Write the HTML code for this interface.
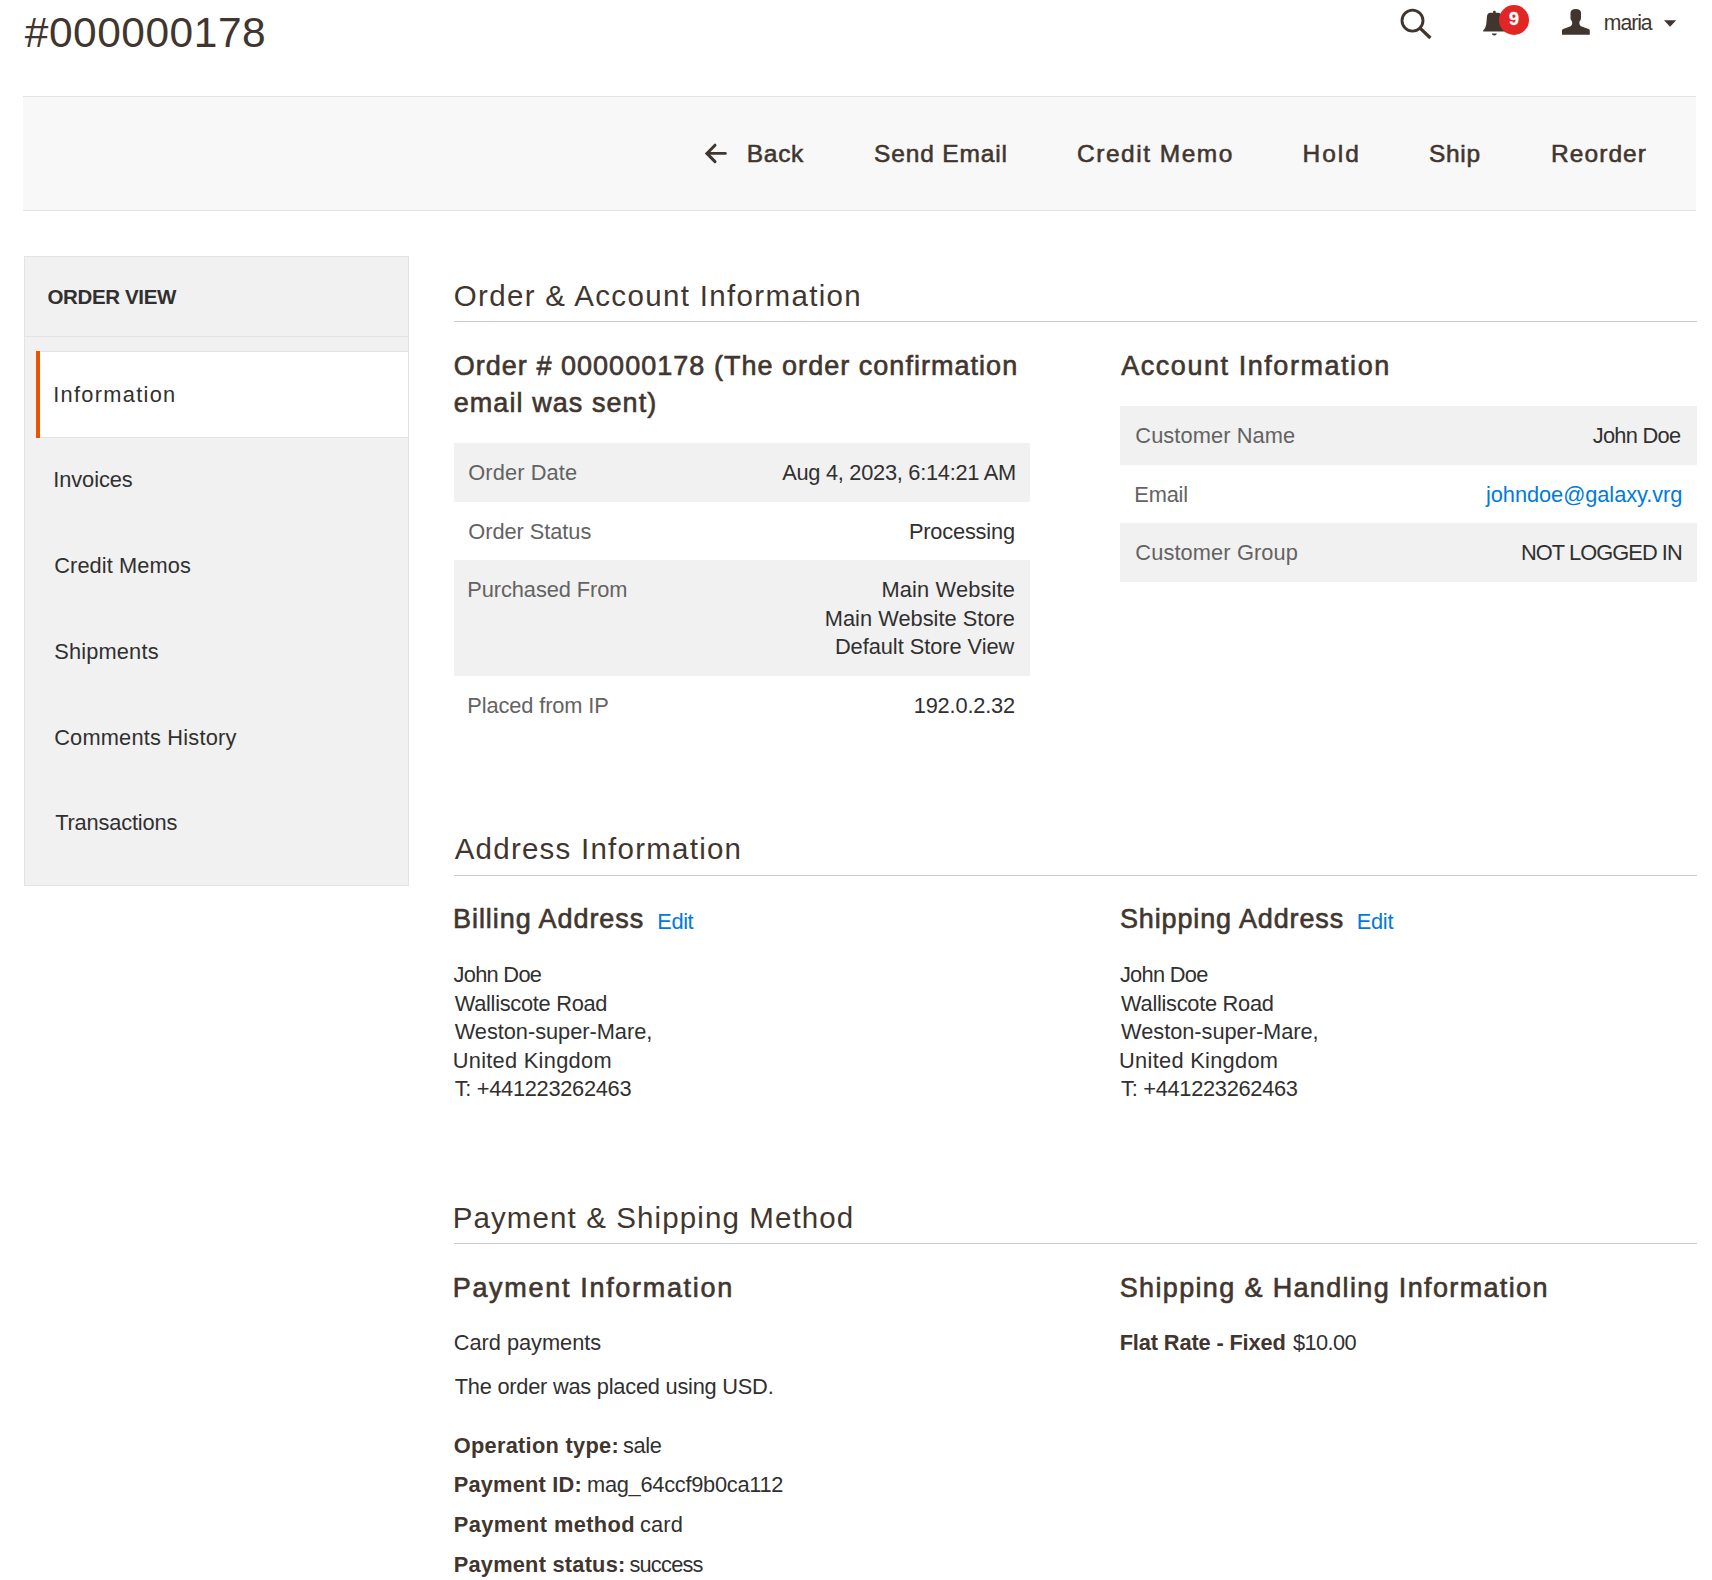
<!DOCTYPE html>
<html><head><meta charset="utf-8"><title>#000000178</title>
<style>
html,body{margin:0;padding:0;background:#fff;}
body{position:relative;width:1712px;height:1580px;overflow:hidden;font-family:"Liberation Sans",sans-serif;}
.t{position:absolute;white-space:pre;line-height:1;}
.r{position:absolute;box-sizing:border-box;}
</style></head><body>
<!-- toolbar -->
<div class="r" style="left:23px;top:96px;width:1673px;height:115px;background:#f8f8f8;border-top:1px solid #e3e3e3;border-bottom:1px solid #e3e3e3"></div>
<!-- sidebar -->
<div class="r" style="left:24px;top:256px;width:385px;height:630px;background:#f1f1f1;border:1px solid #e3e3e3"></div>
<div class="r" style="left:25px;top:336px;width:383px;height:1px;background:#e3e3e3"></div>
<div class="r" style="left:36px;top:351px;width:372px;height:87px;background:#fff;border-top:1px solid #e3e3e3;border-bottom:1px solid #e3e3e3"></div>
<div class="r" style="left:36px;top:351px;width:4px;height:87px;background:#eb5202"></div>
<!-- section dividers -->
<div class="r" style="left:454px;top:321px;width:1243px;height:1px;background:#cccccc"></div>
<div class="r" style="left:454px;top:875px;width:1243px;height:1px;background:#cccccc"></div>
<div class="r" style="left:454px;top:1243px;width:1243px;height:1px;background:#cccccc"></div>
<!-- order table zebra -->
<div class="r" style="left:454px;top:443px;width:576px;height:59px;background:#f1f1f1"></div>
<div class="r" style="left:454px;top:560px;width:576px;height:116px;background:#f1f1f1"></div>
<!-- account table zebra -->
<div class="r" style="left:1120px;top:406px;width:577px;height:59px;background:#f1f1f1"></div>
<div class="r" style="left:1120px;top:523px;width:577px;height:59px;background:#f1f1f1"></div>
<!-- icons -->
<svg style="position:absolute;left:0;top:0" width="1712" height="60" viewBox="0 0 1712 60">
  <circle cx="1412.5" cy="20.6" r="10.5" fill="none" stroke="#41362f" stroke-width="2.9"/>
  <line x1="1419.5" y1="27.6" x2="1430.4" y2="38" stroke="#41362f" stroke-width="3.3"/>
  <rect x="1493.1" y="10.8" width="2.6" height="3" rx="1" fill="#41362f"/>
  <path d="M1483,31.6 L1483.2,30.6 C1485.2,28.8 1486.2,26 1486.5,22 L1486.9,16.8 C1487.1,14 1488.4,12.8 1490.6,12.8 L1498,12.8 C1500.2,12.8 1501.5,14 1501.7,16.8 L1502.1,22 C1502.4,26 1503.4,28.8 1505.4,30.6 L1505.6,31.6 Z" fill="#41362f"/>
  <path d="M1491.8,33.5 L1496.8,33.5 C1496.6,34.8 1495.7,35.5 1494.3,35.5 C1492.9,35.5 1492,34.8 1491.8,33.5 Z" fill="#41362f"/>
  <circle cx="1514" cy="20" r="15" fill="#e22626"/>
  <path d="M1562,34.8 L1562,30.6 C1562,29.8 1562.4,29.4 1563.2,29 L1570.6,26.2 C1571.8,25.6 1572.2,24.5 1572.2,22.8 L1572,21.2 C1571,20.4 1570.5,19.6 1570.5,18 L1570.5,12.6 C1570.5,10.3 1572.5,8.9 1575.8,8.9 C1579.1,8.9 1581,10.3 1581,12.6 L1581,18 C1581,19.6 1580.5,20.4 1579.6,21.2 L1579.4,22.8 C1579.4,24.5 1579.8,25.6 1581,26.2 L1588.6,29 C1589.4,29.4 1589.8,29.8 1589.8,30.6 L1589.8,34.8 Z" fill="#41362f"/>
  <polygon points="1664,20.2 1676.2,20.2 1670.1,26.8" fill="#41362f"/>
</svg>
<div class="t" style="left:1499px;top:10px;width:30px;text-align:center;font-size:18px;font-weight:700;color:#fff;-webkit-text-stroke:0.3px #fff">9</div>
<svg style="position:absolute;left:700px;top:140px" width="32" height="26" viewBox="700 140 32 26">
  <line x1="708" y1="153.4" x2="725.3" y2="153.4" stroke="#41362f" stroke-width="2.9" stroke-linecap="round"/>
  <polyline points="715,145.2 706.9,153.4 715,161.6" fill="none" stroke="#41362f" stroke-width="3" stroke-linecap="round" stroke-linejoin="miter"/>
</svg>
<div class="t" style="left:24.8px;top:12px;font-size:42.5px;font-weight:400;letter-spacing:0.50px;color:#41362f">#000000178</div>
<div class="t" style="left:1603.8px;top:12px;font-size:21.2px;font-weight:400;letter-spacing:-1.05px;color:#41362f">maria</div>
<div class="t" style="left:746.8px;top:142px;font-size:24.5px;font-weight:400;letter-spacing:0.70px;color:#41362f;-webkit-text-stroke:0.56px #41362f">Back</div>
<div class="t" style="left:874.0px;top:142px;font-size:24.5px;font-weight:400;letter-spacing:0.86px;color:#41362f;-webkit-text-stroke:0.56px #41362f">Send Email</div>
<div class="t" style="left:1077.1px;top:142px;font-size:24.5px;font-weight:400;letter-spacing:1.50px;color:#41362f;-webkit-text-stroke:0.56px #41362f">Credit Memo</div>
<div class="t" style="left:1302.4px;top:142px;font-size:24.5px;font-weight:400;letter-spacing:2.07px;color:#41362f;-webkit-text-stroke:0.56px #41362f">Hold</div>
<div class="t" style="left:1429.0px;top:142px;font-size:24.5px;font-weight:400;letter-spacing:0.67px;color:#41362f;-webkit-text-stroke:0.56px #41362f">Ship</div>
<div class="t" style="left:1551.1px;top:142px;font-size:24.5px;font-weight:400;letter-spacing:1.05px;color:#41362f;-webkit-text-stroke:0.56px #41362f">Reorder</div>
<div class="t" style="left:47.5px;top:287px;font-size:20.5px;font-weight:700;letter-spacing:-0.37px;color:#303030">ORDER VIEW</div>
<div class="t" style="left:53.2px;top:384px;font-size:21.8px;font-weight:400;letter-spacing:1.30px;color:#303030">Information</div>
<div class="t" style="left:53.2px;top:469px;font-size:21.8px;font-weight:400;letter-spacing:-0.06px;color:#303030">Invoices</div>
<div class="t" style="left:54.2px;top:555px;font-size:21.8px;font-weight:400;letter-spacing:0.10px;color:#303030">Credit Memos</div>
<div class="t" style="left:54.2px;top:641px;font-size:21.8px;font-weight:400;letter-spacing:0.17px;color:#303030">Shipments</div>
<div class="t" style="left:54.2px;top:727px;font-size:21.8px;font-weight:400;letter-spacing:0.19px;color:#303030">Comments History</div>
<div class="t" style="left:55.2px;top:812px;font-size:21.8px;font-weight:400;letter-spacing:-0.17px;color:#303030">Transactions</div>
<div class="t" style="left:453.7px;top:281px;font-size:29.5px;font-weight:400;letter-spacing:1.34px;color:#41362f">Order &amp; Account Information</div>
<div class="t" style="left:454.7px;top:834px;font-size:29.5px;font-weight:400;letter-spacing:1.24px;color:#41362f">Address Information</div>
<div class="t" style="left:452.7px;top:1203px;font-size:29.5px;font-weight:400;letter-spacing:1.11px;color:#41362f">Payment &amp; Shipping Method</div>
<div class="t" style="left:453.7px;top:353px;font-size:27px;font-weight:400;letter-spacing:1.03px;color:#41362f;-webkit-text-stroke:0.62px #41362f">Order # 000000178 (The order confirmation</div>
<div class="t" style="left:453.7px;top:390px;font-size:27px;font-weight:400;letter-spacing:1.07px;color:#41362f;-webkit-text-stroke:0.62px #41362f">email was sent)</div>
<div class="t" style="left:1121.2px;top:353px;font-size:27px;font-weight:400;letter-spacing:1.55px;color:#41362f;-webkit-text-stroke:0.62px #41362f">Account Information</div>
<div class="t" style="left:453.0px;top:906px;font-size:27px;font-weight:400;letter-spacing:0.94px;color:#41362f;-webkit-text-stroke:0.62px #41362f">Billing Address</div>
<div class="t" style="left:657.3px;top:911px;font-size:21.8px;font-weight:400;letter-spacing:-0.40px;color:#007bdb">Edit</div>
<div class="t" style="left:1119.9px;top:906px;font-size:27px;font-weight:400;letter-spacing:0.88px;color:#41362f;-webkit-text-stroke:0.62px #41362f">Shipping Address</div>
<div class="t" style="left:1356.8px;top:911px;font-size:21.8px;font-weight:400;letter-spacing:-0.30px;color:#007bdb">Edit</div>
<div class="t" style="left:452.7px;top:1275px;font-size:27px;font-weight:400;letter-spacing:1.69px;color:#41362f;-webkit-text-stroke:0.62px #41362f">Payment Information</div>
<div class="t" style="left:1119.7px;top:1275px;font-size:27px;font-weight:400;letter-spacing:1.35px;color:#41362f;-webkit-text-stroke:0.62px #41362f">Shipping &amp; Handling Information</div>
<div class="t" style="left:468.3px;top:462px;font-size:21.8px;font-weight:400;letter-spacing:0.10px;color:#636363">Order Date</div>
<div class="t" style="left:468.3px;top:521px;font-size:21.8px;font-weight:400;letter-spacing:-0.05px;color:#636363">Order Status</div>
<div class="t" style="left:467.3px;top:579px;font-size:21.8px;font-weight:400;letter-spacing:-0.08px;color:#636363">Purchased From</div>
<div class="t" style="left:467.3px;top:695px;font-size:21.8px;font-weight:400;letter-spacing:-0.11px;color:#636363">Placed from IP</div>
<div class="t" style="left:782.2px;top:462px;font-size:21.8px;font-weight:400;letter-spacing:-0.27px;color:#303030">Aug 4, 2023, 6:14:21 AM</div>
<div class="t" style="left:908.9px;top:521px;font-size:21.8px;font-weight:400;letter-spacing:-0.19px;color:#303030">Processing</div>
<div class="t" style="left:881.5px;top:579px;font-size:21.8px;font-weight:400;letter-spacing:0.15px;color:#303030">Main Website</div>
<div class="t" style="left:824.8px;top:608px;font-size:21.8px;font-weight:400;letter-spacing:0.02px;color:#303030">Main Website Store</div>
<div class="t" style="left:834.9px;top:636px;font-size:21.8px;font-weight:400;letter-spacing:-0.04px;color:#303030">Default Store View</div>
<div class="t" style="left:913.7px;top:695px;font-size:21.8px;font-weight:400;letter-spacing:-0.17px;color:#303030">192.0.2.32</div>
<div class="t" style="left:1135.3px;top:425px;font-size:21.8px;font-weight:400;letter-spacing:0.09px;color:#636363">Customer Name</div>
<div class="t" style="left:1134.3px;top:484px;font-size:21.8px;font-weight:400;letter-spacing:-0.17px;color:#636363">Email</div>
<div class="t" style="left:1135.3px;top:542px;font-size:21.8px;font-weight:400;letter-spacing:0.12px;color:#636363">Customer Group</div>
<div class="t" style="left:1592.7px;top:425px;font-size:21.8px;font-weight:400;letter-spacing:-0.69px;color:#303030">John Doe</div>
<div class="t" style="left:1486.0px;top:484px;font-size:21.8px;font-weight:400;letter-spacing:-0.06px;color:#007bdb">johndoe@galaxy.vrg</div>
<div class="t" style="left:1521.0px;top:542px;font-size:21.8px;font-weight:400;letter-spacing:-0.92px;color:#303030">NOT LOGGED IN</div>
<div class="t" style="left:453.5px;top:964px;font-size:21.8px;font-weight:400;letter-spacing:-0.69px;color:#303030">John Doe</div>
<div class="t" style="left:454.7px;top:993px;font-size:21.8px;font-weight:400;letter-spacing:-0.28px;color:#303030">Walliscote Road</div>
<div class="t" style="left:454.7px;top:1021px;font-size:21.8px;font-weight:400;letter-spacing:-0.04px;color:#303030">Weston-super-Mare,</div>
<div class="t" style="left:452.7px;top:1050px;font-size:21.8px;font-weight:400;letter-spacing:0.29px;color:#303030">United Kingdom</div>
<div class="t" style="left:454.7px;top:1078px;font-size:21.8px;font-weight:400;letter-spacing:-0.29px;color:#303030">T: +441223262463</div>
<div class="t" style="left:1119.9px;top:964px;font-size:21.8px;font-weight:400;letter-spacing:-0.69px;color:#303030">John Doe</div>
<div class="t" style="left:1121.1px;top:993px;font-size:21.8px;font-weight:400;letter-spacing:-0.28px;color:#303030">Walliscote Road</div>
<div class="t" style="left:1121.1px;top:1021px;font-size:21.8px;font-weight:400;letter-spacing:-0.04px;color:#303030">Weston-super-Mare,</div>
<div class="t" style="left:1119.1px;top:1050px;font-size:21.8px;font-weight:400;letter-spacing:0.29px;color:#303030">United Kingdom</div>
<div class="t" style="left:1121.1px;top:1078px;font-size:21.8px;font-weight:400;letter-spacing:-0.29px;color:#303030">T: +441223262463</div>
<div class="t" style="left:453.7px;top:1332px;font-size:21.8px;font-weight:400;letter-spacing:-0.02px;color:#303030">Card payments</div>
<div class="t" style="left:454.7px;top:1376px;font-size:21.8px;font-weight:400;letter-spacing:-0.23px;color:#303030">The order was placed using USD.</div>
<div class="t" style="left:453.7px;top:1435px;font-size:21.8px;font-weight:700;letter-spacing:0.28px;color:#41362f">Operation type:</div>
<div class="t" style="left:623.1px;top:1435px;font-size:21.8px;font-weight:400;letter-spacing:-0.43px;color:#303030">sale</div>
<div class="t" style="left:453.7px;top:1474px;font-size:21.8px;font-weight:700;letter-spacing:0.21px;color:#41362f">Payment ID:</div>
<div class="t" style="left:587.0px;top:1474px;font-size:21.8px;font-weight:400;letter-spacing:-0.27px;color:#303030">mag_64ccf9b0ca112</div>
<div class="t" style="left:453.7px;top:1514px;font-size:21.8px;font-weight:700;letter-spacing:0.41px;color:#41362f">Payment method</div>
<div class="t" style="left:640.0px;top:1514px;font-size:21.8px;font-weight:400;letter-spacing:0.13px;color:#303030">card</div>
<div class="t" style="left:453.7px;top:1554px;font-size:21.8px;font-weight:700;letter-spacing:0.23px;color:#41362f">Payment status:</div>
<div class="t" style="left:629.4px;top:1554px;font-size:21.8px;font-weight:400;letter-spacing:-0.77px;color:#303030">success</div>
<div class="t" style="left:1119.7px;top:1332px;font-size:21.8px;font-weight:700;letter-spacing:-0.14px;color:#41362f">Flat Rate - Fixed</div>
<div class="t" style="left:1293.0px;top:1332px;font-size:21.8px;font-weight:400;letter-spacing:-0.62px;color:#303030">$10.00</div>
</body></html>
